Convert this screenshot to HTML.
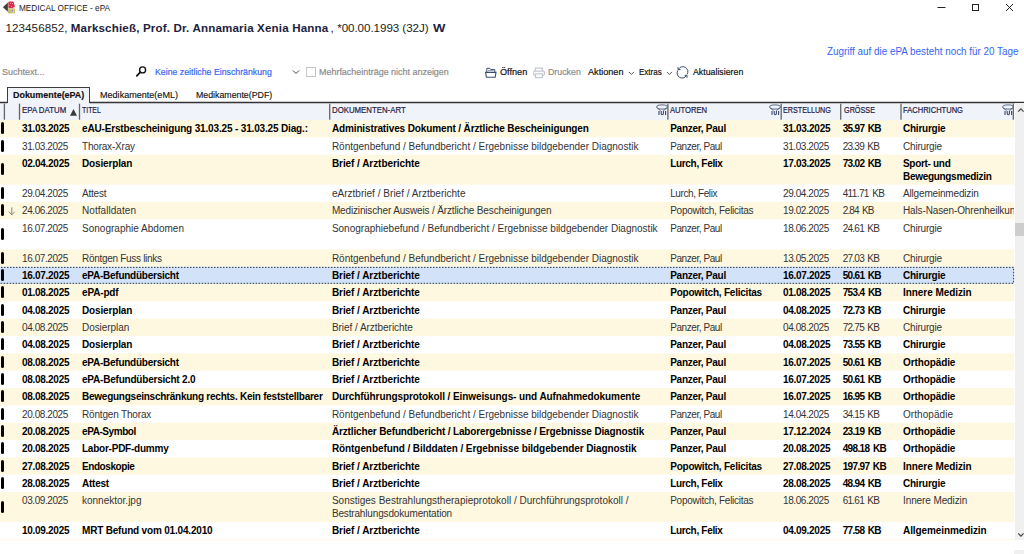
<!DOCTYPE html>
<html lang="de"><head>
<meta charset="utf-8">
<title>MEDICAL OFFICE - ePA</title>
<style>
*{box-sizing:border-box;margin:0;padding:0}
html,body{width:1024px;height:554px;overflow:hidden;background:#fff}
body{position:relative;font-family:"Liberation Sans",sans-serif;font-size:10px;color:#000}
.abs{position:absolute;white-space:nowrap}
/* title bar */
#ttl{left:19.2px;top:2px;font-size:9.5px;line-height:12px;color:#222}
.pat{top:20px;font-size:11.6px;line-height:16px;color:#222}
.pb{color:#1c2340;font-weight:700}
#acc{left:827.3px;top:45px;font-size:10px;line-height:13px;color:#3565f5}
.tb{top:65px;font-size:9.8px;-webkit-text-stroke:0.2px;line-height:13px;color:#111}
.gr{color:#8a8a8a}
.bl{color:#3565f5}
/* tabs */
#tabline{left:0;top:102px;width:1024px;height:1px;background:#333}
#tab1{left:7px;top:87px;width:82.5px;height:16px;border:1px solid #3c3c3c;border-bottom:none;background:#f1f4fa}
.tab{top:88px;font-size:9.7px;-webkit-text-stroke:0.15px;line-height:13px;color:#111}
/* header */
#hdr{left:0;top:103px;width:1014px;height:17px;background:#f0f3fa}
.sep{position:absolute;top:1px;width:1.3px;height:16px;background:#777}
.h{position:absolute;top:1px;font-size:8.7px;-webkit-text-stroke:0.2px;line-height:12px;color:#1f2045;white-space:nowrap}
/* rows */
.row{position:absolute;left:0;width:1013.5px;color:#333;overflow:hidden}
.row.b{color:#000;font-weight:700}
.t{position:absolute;white-space:nowrap;font-size:10px;line-height:12px}
.mk{position:absolute;left:0.5px;width:3px;height:12px;background:#000;border-radius:1.5px}
.arr{position:absolute;left:8px;top:4.6px;font-size:1px;line-height:1;color:transparent;width:8px;height:9px;overflow:hidden}
#sb{left:1015px;top:103px;width:9px;height:437px;background:#f0f0f0}
#thumb{left:1015px;top:223px;width:9px;height:13px;background:#cdcdcd}
</style>
</head>
<body>
<!-- title bar -->
<svg class="abs" style="left:0;top:0" width="18" height="15" viewBox="0 0 18 15">
<path d="M2.9 7.2L7.9 2.6V11.8Z" fill="#3b3e3b"></path>
<path d="M8.3 2.2q0.6-1.2 1.6-0.4q0.8-0.9 1.6 0q1-0.9 1.9 0.1q1 0.6 0.6 1.8q1 0.9 0.6 2.2q0.3 1.5-1 2.3h-4.6q-0.9-0.6-0.7-2z" fill="#d52b47"></path>
<circle cx="10.6" cy="3.2" r="0.55" fill="#f6c9d0"></circle><circle cx="12.6" cy="3.6" r="0.5" fill="#f6c9d0"></circle><circle cx="11.6" cy="6.3" r="0.6" fill="#f3b5bf"></circle><circle cx="13.6" cy="7.4" r="0.5" fill="#f6c9d0"></circle><circle cx="9.4" cy="5.4" r="0.45" fill="#f6c9d0"></circle>
<rect x="7.9" y="8.5" width="7" height="4.8" fill="#cdb35a"></rect>
<rect x="8.8" y="9.4" width="5" height="3.2" fill="#e9dfb4"></rect>
<rect x="8.8" y="11.4" width="2.6" height="1.4" fill="#7bd04a"></rect>
<rect x="11.6" y="9.8" width="1.4" height="1.8" fill="#6d8fd0"></rect>
<rect x="9.5" y="9.8" width="1.2" height="1.4" fill="#c98a4a"></rect>
</svg>
<div id="ttl" class="abs" style="display: inline-block; transform-origin: 0px 0px; transform: scaleX(0.8663);">MEDICAL OFFICE - ePA</div>
<svg class="abs" style="left:940px;top:0;overflow:visible" width="84" height="16" viewBox="0 0 84 16">
<path d="M-2.5 7.5h8" stroke="#222" stroke-width="1" fill="none"></path>
<rect x="32.5" y="4.5" width="6" height="6" stroke="#222" stroke-width="1" fill="none"></rect>
<path d="M66 4l7 7M73 4l-7 7" stroke="#222" stroke-width="1" fill="none"></path>
</svg>
<div class="abs pat" style="left: 5.6px; letter-spacing: 0.059px;">123456852,</div>
<div class="abs pat pb" style="left: 70.8px; letter-spacing: 0.158px;">Markschieß, Prof. Dr. Annamaria Xenia Hanna</div>
<div class="abs pat" style="left:330.5px">,</div>
<div class="abs pat" style="left: 337.2px; letter-spacing: -0.049px;">*00.00.1993 (32J)</div>
<div class="abs pat pb" style="left: 432.6px; display: inline-block; transform-origin: 0px 0px; transform: scaleX(1.1321);">W</div>
<div id="acc" class="abs" style="display: inline-block; transform-origin: 0px 0px; transform: scaleX(0.987);">Zugriff auf die ePA besteht noch für 20 Tage</div>

<!-- toolbar -->
<div class="abs tb gr" style="left: 2px; display: inline-block; transform-origin: 0px 0px; transform: scaleX(0.918);">Suchtext...</div>
<svg class="abs" style="left:135px;top:64.5px" width="13" height="13" viewBox="0 0 13 13"><circle cx="7.6" cy="4.9" r="3" stroke="#111" stroke-width="1.4" fill="none"></circle><path d="M5.4 7.2L1.8 10.8" stroke="#111" stroke-width="1.8" stroke-linecap="round"></path></svg>
<div class="abs tb bl" style="left: 155px; display: inline-block; transform-origin: 0px 0px; transform: scaleX(0.8935);">Keine zeitliche Einschränkung</div>
<svg class="abs" style="left:291.5px;top:69px" width="8" height="6" viewBox="0 0 8 6"><path d="M1 1.5l3 3 3-3" stroke="#444" stroke-width="1" fill="none"></path></svg>
<div class="abs" style="left:306px;top:67px;width:10px;height:10px;border:1px solid #c4c4c4;background:#fff"></div>
<div class="abs tb gr" style="left: 319px; display: inline-block; transform-origin: 0px 0px; transform: scaleX(0.9131);">Mehrfacheinträge nicht anzeigen</div>
<svg class="abs" style="left:484px;top:66px" width="14" height="13" viewBox="0 0 14 13"><path d="M2.8 6.4V2.3H5.8L6.8 3.6H10.8V6.4" stroke="#3c4d6b" stroke-width="1" fill="none"></path><path d="M4 4.6H9.6" stroke="#8b97ab" stroke-width="1"></path><path d="M1.6 6.4H12L11.2 11.2H2.4Z" stroke="#3c4d6b" stroke-width="1.1" fill="#fff"></path></svg>
<div class="abs tb" style="left: 499.7px; display: inline-block; transform-origin: 0px 0px; transform: scaleX(0.9338);">Öffnen</div>
<svg class="abs" style="left:532px;top:66px" width="14" height="13" viewBox="0 0 14 13"><path d="M3.4 5.2V2.1H10.4V5.2" stroke="#c3c8d1" stroke-width="1.2" fill="none"></path><rect x="1.7" y="5.2" width="10.6" height="4.2" rx="0.8" stroke="#c3c8d1" stroke-width="1.2" fill="#fff"></rect><rect x="3.6" y="7.8" width="6.8" height="3.8" stroke="#c3c8d1" stroke-width="1.2" fill="#fff"></rect></svg>
<div class="abs tb gr" style="left: 548.4px; display: inline-block; transform-origin: 0px 0px; transform: scaleX(0.899);">Drucken</div>
<div class="abs tb" style="left: 587.5px; display: inline-block; transform-origin: 0px 0px; transform: scaleX(0.9308);">Aktionen</div>
<svg class="abs" style="left:628px;top:71px" width="7" height="5" viewBox="0 0 7 5"><path d="M0.8 0.9l2.6 2.6 2.6-2.6" stroke="#444" stroke-width="0.9" fill="none"></path></svg>
<div class="abs tb" style="left: 639.1px; display: inline-block; transform-origin: 0px 0px; transform: scaleX(0.8176);">Extras</div>
<svg class="abs" style="left:666.3px;top:71px" width="7" height="5" viewBox="0 0 7 5"><path d="M0.8 0.9l2.6 2.6 2.6-2.6" stroke="#444" stroke-width="0.9" fill="none"></path></svg>
<svg class="abs" style="left:676px;top:66px" width="14" height="14" viewBox="0 0 14 14"><path d="M2.6 3.2A4.9 4.9 0 0 1 11.1 8.6M10.4 9.9A4.9 4.9 0 0 1 1.9 4.5" stroke="#3c4d6b" stroke-width="1" fill="none" transform="translate(0 -0.2)"></path><path d="M2 1.2V3.6H4.6M11 11.8V9.4H8.6" stroke="#3c4d6b" stroke-width="1" fill="none"></path></svg>
<div class="abs tb" style="left: 692.5px; display: inline-block; transform-origin: 0px 0px; transform: scaleX(0.8967);">Aktualisieren</div>

<!-- tabs -->
<div id="tab1" class="abs"></div><div class="abs tab" style="left: 12.5px; font-weight: 700; display: inline-block; transform-origin: 0px 0px; transform: scaleX(0.9219);">Dokumente(ePA)</div>
<div class="abs tab" style="left: 99.5px; display: inline-block; transform-origin: 0px 0px; transform: scaleX(0.9347);">Medikamente(eML)</div>
<div class="abs tab" style="left: 196.3px; display: inline-block; transform-origin: 0px 0px; transform: scaleX(0.9073);">Medikamente(PDF)</div>

<!-- grid header -->
<div id="hdr" class="abs">
<span class="h" style="left: 21.7px; display: inline-block; transform-origin: 0px 0px; transform: scaleX(0.9035);">EPA DATUM</span>
<svg style="position:absolute;left:70.4px;top:5.8px" width="8" height="7" viewBox="0 0 8 7"><path d="M0 6.7L3.5 0L7 6.7Z" fill="#3a3a3a"></path></svg>
<span class="h" style="left: 82px; display: inline-block; transform-origin: 0px 0px; transform: scaleX(0.7947);">TITEL</span>
<span class="h" style="left: 332.3px; display: inline-block; transform-origin: 0px 0px; transform: scaleX(0.9);">DOKUMENTEN-ART</span>
<svg style="position:absolute;left:655.5px;top:0.6px" width="12" height="12" viewBox="0 0 12 12"><ellipse cx="6" cy="3" rx="5.4" ry="2.1" fill="none" stroke="#4a5a80" stroke-width="0.9"></ellipse><path d="M1.5 4.2L4.6 6.6M10.5 4.2L7.4 6.6" stroke="#4a5a80" stroke-width="0.9"></path><path d="M3 7v4M9.6 7v4M5.2 7v2.6a1.1 1.1 0 0 0 2.2 0V7" stroke="#3a486e" stroke-width="1.1" fill="none"></path></svg>
<span class="h" style="left: 670.1px; display: inline-block; transform-origin: 0px 0px; transform: scaleX(0.8765);">AUTOREN</span>
<svg style="position:absolute;left:768.8px;top:0.6px" width="12" height="12" viewBox="0 0 12 12"><ellipse cx="6" cy="3" rx="5.4" ry="2.1" fill="none" stroke="#4a5a80" stroke-width="0.9"></ellipse><path d="M1.5 4.2L4.6 6.6M10.5 4.2L7.4 6.6" stroke="#4a5a80" stroke-width="0.9"></path><path d="M3 7v4M9.6 7v4M5.2 7v2.6a1.1 1.1 0 0 0 2.2 0V7" stroke="#3a486e" stroke-width="1.1" fill="none"></path></svg>
<span class="h" style="left: 783.4px; display: inline-block; transform-origin: 0px 0px; transform: scaleX(0.8268);">ERSTELLUNG</span>
<span class="h" style="left: 843.5px; display: inline-block; transform-origin: 0px 0px; transform: scaleX(0.8336);">GRÖSSE</span>
<span class="h" style="left: 903.4px; display: inline-block; transform-origin: 0px 0px; transform: scaleX(0.8692);">FACHRICHTUNG</span>
<svg style="position:absolute;left:1001.5px;top:0.6px" width="12" height="12" viewBox="0 0 12 12"><ellipse cx="6" cy="3" rx="5.4" ry="2.1" fill="none" stroke="#4a5a80" stroke-width="0.9"></ellipse><path d="M1.5 4.2L4.6 6.6M10.5 4.2L7.4 6.6" stroke="#4a5a80" stroke-width="0.9"></path><path d="M3 7v4M9.6 7v4M5.2 7v2.6a1.1 1.1 0 0 0 2.2 0V7" stroke="#3a486e" stroke-width="1.1" fill="none"></path></svg>

</div>

<svg class="abs" style="left:0;top:101px" width="1024" height="20" viewBox="0 0 1024 20"><path d="M0 0.8H7.5V2.2H0ZM89.5 0.8H1024V2.2H89.5Z" fill="#333"></path><rect x="3.75" y="2.7" width="1.3" height="16" fill="#666"></rect><rect x="18.85" y="2.7" width="1.3" height="16" fill="#666"></rect><rect x="78.85" y="2.7" width="1.3" height="16" fill="#666"></rect><rect x="329.05" y="2.7" width="1.3" height="16" fill="#666"></rect><rect x="667.25" y="2.7" width="1.3" height="16" fill="#666"></rect><rect x="780.55" y="2.7" width="1.3" height="16" fill="#666"></rect><rect x="840.05" y="2.7" width="1.3" height="16" fill="#666"></rect><rect x="900.35" y="2.7" width="1.3" height="16" fill="#666"></rect><rect x="1012.65" y="2.7" width="1.3" height="16" fill="#666"></rect></svg>
<!-- rows -->
<svg class="abs" style="left:0;top:100px" width="1024" height="454" viewBox="0 0 1024 454"><rect x="0" y="20.00" width="1014.3" height="17.33" fill="#fff8e1"></rect><rect x="0" y="54.67" width="1014.3" height="30.00" fill="#fff8e1"></rect><rect x="0" y="102.00" width="1014.3" height="17.33" fill="#fff8e1"></rect><rect x="0" y="149.33" width="1014.3" height="17.33" fill="#fff8e1"></rect><rect x="0" y="166.67" width="1014.3" height="17.33" fill="#d2e2f8"></rect><rect x="0" y="184.00" width="1014.3" height="17.33" fill="#fff8e1"></rect><rect x="0" y="218.67" width="1014.3" height="17.33" fill="#fff8e1"></rect><rect x="0" y="253.33" width="1014.3" height="17.33" fill="#fff8e1"></rect><rect x="0" y="288.00" width="1014.3" height="17.33" fill="#fff8e1"></rect><rect x="0" y="322.67" width="1014.3" height="17.33" fill="#fff8e1"></rect><rect x="0" y="357.33" width="1014.3" height="17.33" fill="#fff8e1"></rect><rect x="0" y="392.00" width="1014.3" height="30.00" fill="#fff8e1"></rect><rect x="0" y="439.33" width="1014.3" height="0.9" fill="#fff8e1"></rect></svg>
<div class="row b" style="top:120.00px;height:17.33px">
<i class="mk" style="top:2.3px"></i>
<span class="t" style="left: 22px; top: 3px; letter-spacing: -0.285px;">31.03.2025</span>
<span class="t" style="left: 82px; top: 3px; letter-spacing: -0.158px;">eAU-Erstbescheinigung 31.03.25 - 31.03.25 Diag.:</span>
<span class="t" style="left: 331.9px; top: 3px; letter-spacing: -0.125px;">Administratives Dokument / Ärztliche Bescheinigungen</span>
<span class="t" style="left: 670.2px; top: 3px; letter-spacing: -0.266px;">Panzer, Paul</span>
<span class="t" style="left: 783px; top: 3px; letter-spacing: -0.285px;">31.03.2025</span>
<span class="t" style="left: 842.7px; top: 3px; word-spacing: 1.3px; letter-spacing: -0.678px;">35.97 KB</span>
<span class="t" style="left: 903px; top: 3px; letter-spacing: -0.232px;">Chirurgie</span>
</div>
<div class="row" style="top:137.33px;height:17.33px">
<i class="mk" style="top:2.3px"></i>
<span class="t" style="left: 22px; top: 3.7px; letter-spacing: -0.418px;">31.03.2025</span>
<span class="t" style="left: 82px; top: 3.7px; letter-spacing: -0.202px;">Thorax-Xray</span>
<span class="t" style="left: 331.9px; top: 3.7px; letter-spacing: -0.006px;">Röntgenbefund / Befundbericht / Ergebnisse bildgebender Diagnostik</span>
<span class="t" style="left: 670.2px; top: 3.7px; letter-spacing: -0.429px;">Panzer, Paul</span>
<span class="t" style="left: 783px; top: 3.7px; letter-spacing: -0.418px;">31.03.2025</span>
<span class="t" style="left: 842.7px; top: 3.7px; word-spacing: 1.3px; letter-spacing: -0.75px;">23.39 KB</span>
<span class="t" style="left: 903px; top: 3.7px; letter-spacing: -0.197px;">Chirurgie</span>
</div>
<div class="row b" style="top:154.67px;height:30.00px">
<i class="mk" style="top:8.6px"></i>
<span class="t" style="left: 22px; top: 3.3px; letter-spacing: -0.285px;">02.04.2025</span>
<span class="t" style="left: 82px; top: 3.3px; letter-spacing: -0.154px;">Dosierplan</span>
<span class="t" style="left: 331.9px; top: 3.3px; letter-spacing: -0.058px;">Brief / Arztberichte</span>
<span class="t" style="left: 670.2px; top: 3.3px; letter-spacing: -0.311px;">Lurch, Felix</span>
<span class="t" style="left: 783px; top: 3.3px; letter-spacing: -0.285px;">17.03.2025</span>
<span class="t" style="left: 842.7px; top: 3.3px; word-spacing: 1.3px; letter-spacing: -0.674px;">73.02 KB</span>
<span class="t" style="left: 903px; top: 3.3px; letter-spacing: -0.311px;">Sport- und</span>
<span class="t" style="left: 903px; top: 16.3px; letter-spacing: -0.304px;">Bewegungsmedizin</span>
</div>
<div class="row" style="top:184.67px;height:17.33px">
<i class="mk" style="top:2.3px"></i>
<span class="t" style="left: 22px; top: 3.3px; letter-spacing: -0.418px;">29.04.2025</span>
<span class="t" style="left: 82px; top: 3.3px; letter-spacing: -0.216px;">Attest</span>
<span class="t" style="left: 331.9px; top: 3.3px; letter-spacing: 0.024px;">eArztbrief / Brief / Arztberichte</span>
<span class="t" style="left: 670.2px; top: 3.3px; letter-spacing: -0.399px;">Lurch, Felix</span>
<span class="t" style="left: 783px; top: 3.3px; letter-spacing: -0.418px;">29.04.2025</span>
<span class="t" style="left: 842.7px; top: 3.3px; word-spacing: 1.3px; letter-spacing: -0.633px;">411.71 KB</span>
<span class="t" style="left: 903px; top: 3.3px; letter-spacing: -0.172px;">Allgemeinmedizin</span>
</div>
<div class="row" style="top:202.00px;height:17.33px">
<i class="mk" style="top:2.3px"></i>
<span class="t" style="left: 22px; top: 3px; letter-spacing: -0.418px;">24.06.2025</span>
<span class="t" style="left: 82px; top: 3px; letter-spacing: 0.057px;">Notfalldaten</span>
<span class="t" style="left: 331.9px; top: 3px; letter-spacing: -0.15px;">Medizinischer Ausweis / Ärztliche Bescheinigungen</span>
<span class="t" style="left: 670.2px; top: 3px; letter-spacing: -0.262px;">Popowitch, Felicitas</span>
<span class="t" style="left: 783px; top: 3px; letter-spacing: -0.418px;">19.02.2025</span>
<span class="t" style="left: 842.7px; top: 3px; word-spacing: 1.3px; letter-spacing: -0.865px;">2.84 KB</span>
<span class="t" style="left: 903px; top: 3px; letter-spacing: -0.128px;">Hals-Nasen-Ohrenheilkunde</span>
</div>
<div class="row" style="top:219.33px;height:30.00px">
<i class="mk" style="top:8.6px"></i>
<span class="t" style="left: 22px; top: 3.7px; letter-spacing: -0.418px;">16.07.2025</span>
<span class="t" style="left: 82px; top: 3.7px; letter-spacing: 0.014px;">Sonographie Abdomen</span>
<span class="t" style="left: 331.9px; top: 3.7px; letter-spacing: -0.001px;">Sonographiebefund / Befundbericht / Ergebnisse bildgebender Diagnostik</span>
<span class="t" style="left: 670.2px; top: 3.7px; letter-spacing: -0.429px;">Panzer, Paul</span>
<span class="t" style="left: 783px; top: 3.7px; letter-spacing: -0.418px;">18.06.2025</span>
<span class="t" style="left: 842.7px; top: 3.7px; word-spacing: 1.3px; letter-spacing: -0.744px;">24.61 KB</span>
<span class="t" style="left: 903px; top: 3.7px; letter-spacing: -0.197px;">Chirurgie</span>
</div>
<div class="row" style="top:249.33px;height:17.33px">
<i class="mk" style="top:2.3px"></i>
<span class="t" style="left: 22px; top: 3.7px; letter-spacing: -0.418px;">16.07.2025</span>
<span class="t" style="left: 82px; top: 3.7px; letter-spacing: -0.297px;">Röntgen Fuss links</span>
<span class="t" style="left: 331.9px; top: 3.7px; letter-spacing: -0.006px;">Röntgenbefund / Befundbericht / Ergebnisse bildgebender Diagnostik</span>
<span class="t" style="left: 670.2px; top: 3.7px; letter-spacing: -0.429px;">Panzer, Paul</span>
<span class="t" style="left: 783px; top: 3.7px; letter-spacing: -0.418px;">13.05.2025</span>
<span class="t" style="left: 842.7px; top: 3.7px; word-spacing: 1.3px; letter-spacing: -0.744px;">27.03 KB</span>
<span class="t" style="left: 903px; top: 3.7px; letter-spacing: -0.197px;">Chirurgie</span>
</div>
<div class="row b" style="top:266.67px;height:17.33px">
<i class="mk" style="top:2.3px"></i>
<span class="t" style="left: 22px; top: 3.3px; letter-spacing: -0.285px;">16.07.2025</span>
<span class="t" style="left: 82px; top: 3.3px; letter-spacing: -0.25px;">ePA-Befundübersicht</span>
<span class="t" style="left: 331.9px; top: 3.3px; letter-spacing: -0.058px;">Brief / Arztberichte</span>
<span class="t" style="left: 670.2px; top: 3.3px; letter-spacing: -0.266px;">Panzer, Paul</span>
<span class="t" style="left: 783px; top: 3.3px; letter-spacing: -0.285px;">16.07.2025</span>
<span class="t" style="left: 842.7px; top: 3.3px; word-spacing: 1.3px; letter-spacing: -0.674px;">50.61 KB</span>
<span class="t" style="left: 903px; top: 3.3px; letter-spacing: -0.232px;">Chirurgie</span>
</div>
<div class="row b" style="top:284.00px;height:17.33px">
<i class="mk" style="top:2.3px"></i>
<span class="t" style="left: 22px; top: 3px; letter-spacing: -0.285px;">01.08.2025</span>
<span class="t" style="left: 82px; top: 3px; letter-spacing: -0.166px;">ePA-pdf</span>
<span class="t" style="left: 331.9px; top: 3px; letter-spacing: -0.058px;">Brief / Arztberichte</span>
<span class="t" style="left: 670.2px; top: 3px; letter-spacing: -0.218px;">Popowitch, Felicitas</span>
<span class="t" style="left: 783px; top: 3px; letter-spacing: -0.285px;">01.08.2025</span>
<span class="t" style="left: 842.7px; top: 3px; word-spacing: 1.3px; letter-spacing: -0.65px;">753.4 KB</span>
<span class="t" style="left: 903px; top: 3px; letter-spacing: -0.058px;">Innere Medizin</span>
</div>
<div class="row b" style="top:301.33px;height:17.33px">
<i class="mk" style="top:2.3px"></i>
<span class="t" style="left: 22px; top: 3.7px; letter-spacing: -0.285px;">04.08.2025</span>
<span class="t" style="left: 82px; top: 3.7px; letter-spacing: -0.154px;">Dosierplan</span>
<span class="t" style="left: 331.9px; top: 3.7px; letter-spacing: -0.058px;">Brief / Arztberichte</span>
<span class="t" style="left: 670.2px; top: 3.7px; letter-spacing: -0.266px;">Panzer, Paul</span>
<span class="t" style="left: 783px; top: 3.7px; letter-spacing: -0.285px;">04.08.2025</span>
<span class="t" style="left: 842.7px; top: 3.7px; word-spacing: 1.3px; letter-spacing: -0.674px;">72.73 KB</span>
<span class="t" style="left: 903px; top: 3.7px; letter-spacing: -0.232px;">Chirurgie</span>
</div>
<div class="row" style="top:318.67px;height:17.33px">
<i class="mk" style="top:2.3px"></i>
<span class="t" style="left: 22px; top: 3.3px; letter-spacing: -0.418px;">04.08.2025</span>
<span class="t" style="left: 82px; top: 3.3px; letter-spacing: -0.057px;">Dosierplan</span>
<span class="t" style="left: 331.9px; top: 3.3px; letter-spacing: -0.037px;">Brief / Arztberichte</span>
<span class="t" style="left: 670.2px; top: 3.3px; letter-spacing: -0.429px;">Panzer, Paul</span>
<span class="t" style="left: 783px; top: 3.3px; letter-spacing: -0.418px;">04.08.2025</span>
<span class="t" style="left: 842.7px; top: 3.3px; word-spacing: 1.3px; letter-spacing: -0.744px;">72.75 KB</span>
<span class="t" style="left: 903px; top: 3.3px; letter-spacing: -0.197px;">Chirurgie</span>
</div>
<div class="row b" style="top:336.00px;height:17.33px">
<i class="mk" style="top:2.3px"></i>
<span class="t" style="left: 22px; top: 3px; letter-spacing: -0.285px;">04.08.2025</span>
<span class="t" style="left: 82px; top: 3px; letter-spacing: -0.154px;">Dosierplan</span>
<span class="t" style="left: 331.9px; top: 3px; letter-spacing: -0.058px;">Brief / Arztberichte</span>
<span class="t" style="left: 670.2px; top: 3px; letter-spacing: -0.266px;">Panzer, Paul</span>
<span class="t" style="left: 783px; top: 3px; letter-spacing: -0.285px;">04.08.2025</span>
<span class="t" style="left: 842.7px; top: 3px; word-spacing: 1.3px; letter-spacing: -0.674px;">73.55 KB</span>
<span class="t" style="left: 903px; top: 3px; letter-spacing: -0.232px;">Chirurgie</span>
</div>
<div class="row b" style="top:353.33px;height:17.33px">
<i class="mk" style="top:2.3px"></i>
<span class="t" style="left: 22px; top: 3.7px; letter-spacing: -0.285px;">08.08.2025</span>
<span class="t" style="left: 82px; top: 3.7px; letter-spacing: -0.25px;">ePA-Befundübersicht</span>
<span class="t" style="left: 331.9px; top: 3.7px; letter-spacing: -0.058px;">Brief / Arztberichte</span>
<span class="t" style="left: 670.2px; top: 3.7px; letter-spacing: -0.266px;">Panzer, Paul</span>
<span class="t" style="left: 783px; top: 3.7px; letter-spacing: -0.285px;">16.07.2025</span>
<span class="t" style="left: 842.7px; top: 3.7px; word-spacing: 1.3px; letter-spacing: -0.674px;">50.61 KB</span>
<span class="t" style="left: 903px; top: 3.7px; letter-spacing: -0.105px;">Orthopädie</span>
</div>
<div class="row b" style="top:370.67px;height:17.33px">
<i class="mk" style="top:2.3px"></i>
<span class="t" style="left: 22px; top: 3.3px; letter-spacing: -0.285px;">08.08.2025</span>
<span class="t" style="left: 82px; top: 3.3px; letter-spacing: -0.212px;">ePA-Befundübersicht 2.0</span>
<span class="t" style="left: 331.9px; top: 3.3px; letter-spacing: -0.058px;">Brief / Arztberichte</span>
<span class="t" style="left: 670.2px; top: 3.3px; letter-spacing: -0.266px;">Panzer, Paul</span>
<span class="t" style="left: 783px; top: 3.3px; letter-spacing: -0.285px;">16.07.2025</span>
<span class="t" style="left: 842.7px; top: 3.3px; word-spacing: 1.3px; letter-spacing: -0.674px;">50.61 KB</span>
<span class="t" style="left: 903px; top: 3.3px; letter-spacing: -0.105px;">Orthopädie</span>
</div>
<div class="row b" style="top:388.00px;height:17.33px">
<i class="mk" style="top:2.3px"></i>
<span class="t" style="left: 22px; top: 3px; letter-spacing: -0.285px;">08.08.2025</span>
<span class="t" style="left: 82px; top: 3px; letter-spacing: -0.246px;">Bewegungseinschränkung rechts. Kein feststellbarer</span>
<span class="t" style="left: 331.9px; top: 3px; letter-spacing: -0.09px;">Durchführungsprotokoll / Einweisungs- und Aufnahmedokumente</span>
<span class="t" style="left: 670.2px; top: 3px; letter-spacing: -0.266px;">Panzer, Paul</span>
<span class="t" style="left: 783px; top: 3px; letter-spacing: -0.285px;">16.07.2025</span>
<span class="t" style="left: 842.7px; top: 3px; word-spacing: 1.3px; letter-spacing: -0.674px;">16.95 KB</span>
<span class="t" style="left: 903px; top: 3px; letter-spacing: -0.105px;">Orthopädie</span>
</div>
<div class="row" style="top:405.33px;height:17.33px">
<i class="mk" style="top:2.3px"></i>
<span class="t" style="left: 22px; top: 3.7px; letter-spacing: -0.418px;">20.08.2025</span>
<span class="t" style="left: 82px; top: 3.7px; letter-spacing: -0.172px;">Röntgen Thorax</span>
<span class="t" style="left: 331.9px; top: 3.7px; letter-spacing: -0.006px;">Röntgenbefund / Befundbericht / Ergebnisse bildgebender Diagnostik</span>
<span class="t" style="left: 670.2px; top: 3.7px; letter-spacing: -0.429px;">Panzer, Paul</span>
<span class="t" style="left: 783px; top: 3.7px; letter-spacing: -0.418px;">14.04.2025</span>
<span class="t" style="left: 842.7px; top: 3.7px; word-spacing: 1.3px; letter-spacing: -0.744px;">34.15 KB</span>
<span class="t" style="left: 903px; top: 3.7px; letter-spacing: 0.057px;">Orthopädie</span>
</div>
<div class="row b" style="top:422.67px;height:17.33px">
<i class="mk" style="top:2.3px"></i>
<span class="t" style="left: 22px; top: 3.3px; letter-spacing: -0.285px;">20.08.2025</span>
<span class="t" style="left: 82px; top: 3.3px; letter-spacing: -0.43px;">ePA-Symbol</span>
<span class="t" style="left: 331.9px; top: 3.3px; letter-spacing: -0.145px;">Ärztlicher Befundbericht / Laborergebnisse / Ergebnisse Diagnostik</span>
<span class="t" style="left: 670.2px; top: 3.3px; letter-spacing: -0.266px;">Panzer, Paul</span>
<span class="t" style="left: 783px; top: 3.3px; letter-spacing: -0.285px;">17.12.2024</span>
<span class="t" style="left: 842.7px; top: 3.3px; word-spacing: 1.3px; letter-spacing: -0.674px;">23.19 KB</span>
<span class="t" style="left: 903px; top: 3.3px; letter-spacing: -0.105px;">Orthopädie</span>
</div>
<div class="row b" style="top:440.00px;height:17.33px">
<i class="mk" style="top:2.3px"></i>
<span class="t" style="left: 22px; top: 3px; letter-spacing: -0.285px;">20.08.2025</span>
<span class="t" style="left: 82px; top: 3px; letter-spacing: -0.236px;">Labor-PDF-dummy</span>
<span class="t" style="left: 331.9px; top: 3px; letter-spacing: -0.078px;">Röntgenbefund / Bilddaten / Ergebnisse bildgebender Diagnostik</span>
<span class="t" style="left: 670.2px; top: 3px; letter-spacing: -0.266px;">Panzer, Paul</span>
<span class="t" style="left: 783px; top: 3px; letter-spacing: -0.285px;">20.08.2025</span>
<span class="t" style="left: 842.7px; top: 3px; word-spacing: 1.3px; letter-spacing: -0.639px;">498.18 KB</span>
<span class="t" style="left: 903px; top: 3px; letter-spacing: -0.105px;">Orthopädie</span>
</div>
<div class="row b" style="top:457.33px;height:17.33px">
<i class="mk" style="top:2.3px"></i>
<span class="t" style="left: 22px; top: 3.7px; letter-spacing: -0.285px;">27.08.2025</span>
<span class="t" style="left: 82px; top: 3.7px; letter-spacing: -0.432px;">Endoskopie</span>
<span class="t" style="left: 331.9px; top: 3.7px; letter-spacing: -0.058px;">Brief / Arztberichte</span>
<span class="t" style="left: 670.2px; top: 3.7px; letter-spacing: -0.218px;">Popowitch, Felicitas</span>
<span class="t" style="left: 783px; top: 3.7px; letter-spacing: -0.285px;">27.08.2025</span>
<span class="t" style="left: 842.7px; top: 3.7px; word-spacing: 1.3px; letter-spacing: -0.646px;">197.97 KB</span>
<span class="t" style="left: 903px; top: 3.7px; letter-spacing: -0.058px;">Innere Medizin</span>
</div>
<div class="row b" style="top:474.67px;height:17.33px">
<i class="mk" style="top:2.3px"></i>
<span class="t" style="left: 22px; top: 3.3px; letter-spacing: -0.285px;">28.08.2025</span>
<span class="t" style="left: 82px; top: 3.3px; letter-spacing: -0.229px;">Attest</span>
<span class="t" style="left: 331.9px; top: 3.3px; letter-spacing: -0.058px;">Brief / Arztberichte</span>
<span class="t" style="left: 670.2px; top: 3.3px; letter-spacing: -0.311px;">Lurch, Felix</span>
<span class="t" style="left: 783px; top: 3.3px; letter-spacing: -0.285px;">28.08.2025</span>
<span class="t" style="left: 842.7px; top: 3.3px; word-spacing: 1.3px; letter-spacing: -0.674px;">48.94 KB</span>
<span class="t" style="left: 903px; top: 3.3px; letter-spacing: -0.232px;">Chirurgie</span>
</div>
<div class="row" style="top:492.00px;height:30.00px">
<i class="mk" style="top:8.6px"></i>
<span class="t" style="left: 22px; top: 3px; letter-spacing: -0.418px;">03.09.2025</span>
<span class="t" style="left: 82px; top: 3px; letter-spacing: 0px;">konnektor.jpg</span>
<span class="t" style="left: 331.9px; top: 3px; letter-spacing: 0.006px;">Sonstiges Bestrahlungstherapieprotokoll / Durchführungsprotokoll /</span>
<span class="t" style="left: 331.9px; top: 16px; letter-spacing: -0.154px;">Bestrahlungsdokumentation</span>
<span class="t" style="left: 670.2px; top: 3px; letter-spacing: -0.262px;">Popowitch, Felicitas</span>
<span class="t" style="left: 783px; top: 3px; letter-spacing: -0.418px;">18.06.2025</span>
<span class="t" style="left: 842.7px; top: 3px; word-spacing: 1.3px; letter-spacing: -0.744px;">61.61 KB</span>
<span class="t" style="left: 903px; top: 3px; letter-spacing: -0.1px;">Innere Medizin</span>
</div>
<div class="row b" style="top:522.00px;height:17.33px">
<span class="t" style="left: 22px; top: 3px; letter-spacing: -0.285px;">10.09.2025</span>
<span class="t" style="left: 82px; top: 3px; letter-spacing: -0.185px;">MRT Befund vom 01.04.2010</span>
<span class="t" style="left: 331.9px; top: 3px; letter-spacing: -0.058px;">Brief / Arztberichte</span>
<span class="t" style="left: 670.2px; top: 3px; letter-spacing: -0.311px;">Lurch, Felix</span>
<span class="t" style="left: 783px; top: 3px; letter-spacing: -0.285px;">04.09.2025</span>
<span class="t" style="left: 842.7px; top: 3px; word-spacing: 1.3px; letter-spacing: -0.674px;">77.58 KB</span>
<span class="t" style="left: 903px; top: 3px; letter-spacing: -0.094px;">Allgemeinmedizin</span>
</div>

<svg class="abs" style="left:0;top:260px" width="1024" height="30" viewBox="0 0 1024 30"><rect x="-2" y="7.4" width="1015.6" height="15.9" fill="none" stroke="#2a2a2a" stroke-width="0.9" stroke-dasharray="1.5 1.5"></rect></svg>
<svg class="abs" style="left:7px;top:205px" width="10" height="12" viewBox="0 0 10 12"><path d="M4.8 2.4V9.6M1.8 6.6L4.8 9.8L7.8 6.6" stroke="#777" stroke-width="0.9" fill="none"></path></svg>
<!-- scrollbar -->
<div id="sb" class="abs"></div>
<div id="thumb" class="abs"></div>
<svg class="abs" style="left:1016.8px;top:107.4px" width="8" height="6" viewBox="0 0 8 6"><path d="M1.2 4.6l2.7-2.8 2.7 2.8" stroke="#444" stroke-width="1.2" fill="none"></path></svg>
<svg class="abs" style="left:1016.8px;top:531.6px" width="8" height="6" viewBox="0 0 8 6"><path d="M1.2 1.4l2.7 2.8 2.7-2.8" stroke="#444" stroke-width="1.2" fill="none"></path></svg>
<div class="abs" style="left:1014px;top:549.5px;width:10px;height:5px;background:#f0f0f0"></div>


</body></html>
